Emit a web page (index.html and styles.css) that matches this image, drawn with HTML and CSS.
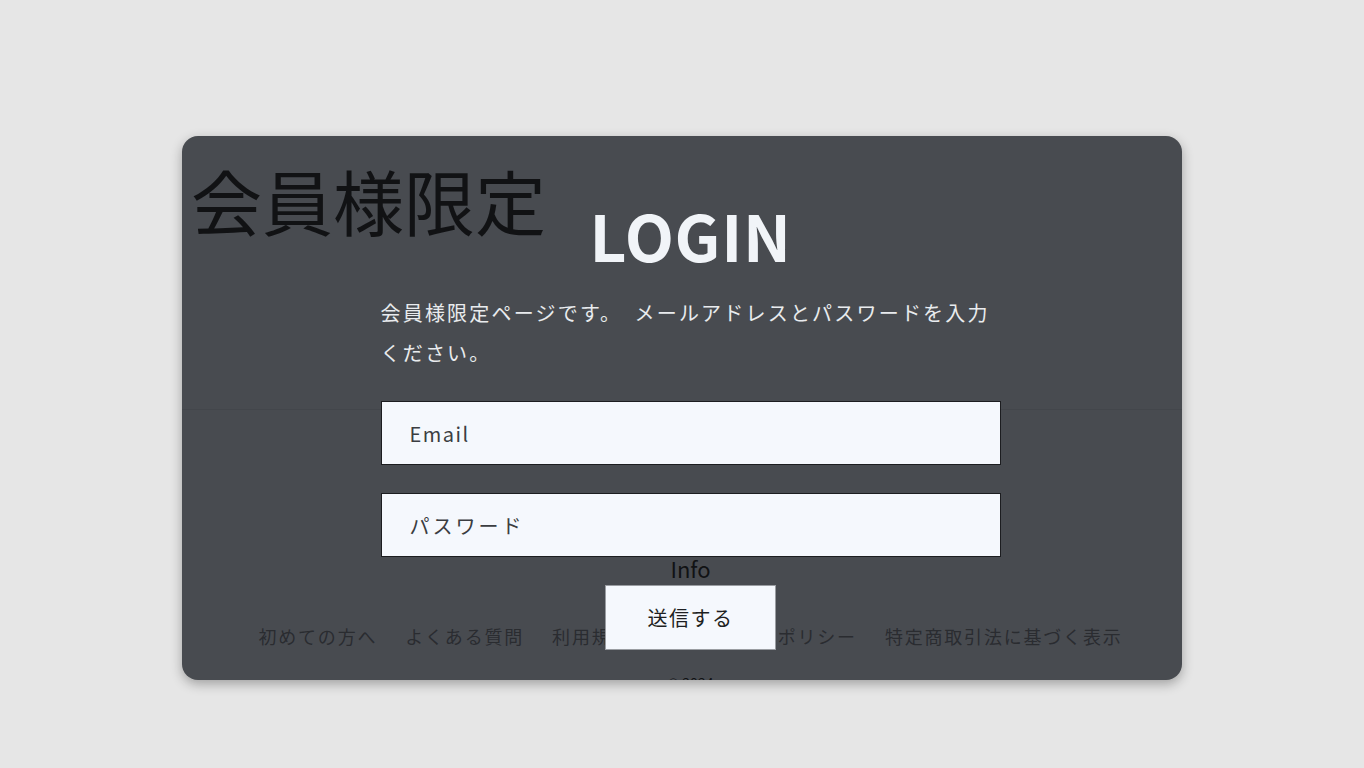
FILE: index.html
```html
<!DOCTYPE html>
<html lang="ja">
  <head>
    <meta charset="utf-8">
    <title>会員様限定 | LOGIN</title>
    <link rel="stylesheet" href="styles.css">
  </head>
  <body>
    <div class="modal">
      <!-- page behind the login form -->
      <div class="page">
        <header class="site-header">
          <h1 class="site-title">会員様限定</h1>
        </header>
        <footer class="site-footer">
          <h2 class="footer-title">Info</h2>
          <ul class="footer-links">
            <li><a href="#">初めての方へ</a></li>
            <li><a href="#">よくある質問</a></li>
            <li><a href="#">利用規約</a></li>
            <li><a href="#">プライバシーポリシー</a></li>
            <li><a href="#">特定商取引法に基づく表示</a></li>
          </ul>
          <p class="copyright">&copy; 2024</p>
        </footer>
      </div>

      <form class="login" action="#">
        <h2 class="login-title">LOGIN</h2>
        <p class="login-text">会員様限定ページです。&ensp;メールアドレスとパスワードを入力ください。</p>
        <input class="field" type="text" placeholder="Email" id="email">
        <input class="field" type="password" placeholder="パスワード" id="pasw">
        <button class="submit" type="button">送信する</button>
      </form>
    </div>
  </body>
</html>
```

FILE: styles.css
```css
html, body {
  margin: 0;
  background: #e6e6e6;
  font-family: "Noto Sans CJK JP", "Noto Sans", sans-serif;
}
body {
  display: flex;
  justify-content: center;
  padding-top: 136px;
  height: 632px;
  box-sizing: content-box;
}
.modal {
  position: relative;
  width: 1000px;
  height: 544px;
  background: #484b50;
  border-radius: 16px;
  overflow: hidden;
  box-shadow: 0 4px 12px rgba(0, 0, 0, 0.3);
}

/* page behind */
.page {
  display: flex;
  flex-direction: column;
}
.site-header {
  height: 273px;
  border-bottom: 1px solid rgba(0, 0, 0, 0.06);
}
.site-title {
  margin: 0;
  padding: 28px 0 0 9px;
  font-size: 71px;
  line-height: 1;
  font-weight: 400;
  color: #111214;
}
.site-footer {
  padding: 143px 0 0 17px;
  text-align: center;
}
.footer-title {
  margin: 0;
  font-size: 22px;
  line-height: 30px;
  font-weight: 400;
  color: #111214;
}
.footer-links {
  display: flex;
  justify-content: center;
  gap: 28px;
  list-style: none;
  margin: 38px 0 0;
  padding: 0;
}
.footer-links a {
  color: #2a2c30;
  text-decoration: none;
  font-size: 18px;
  line-height: 30px;
  letter-spacing: 0.1em;
}
.copyright {
  margin: 22px 0 0;
  font-size: 14px;
  line-height: 20px;
  color: #111214;
}

/* login form on top */
.login {
  position: absolute;
  top: 0;
  left: 0;
  right: 0;
  bottom: 0;
  display: flex;
  flex-direction: column;
  align-items: center;
  padding: 58px 0 0 17px;
}
.login-title {
  margin: 0;
  font-size: 64px;
  line-height: 80px;
  font-weight: 700;
  letter-spacing: 0.01em;
  color: #f1f4f8;
}
.login-text {
  width: 620px;
  margin: 19px 0 0;
  font-size: 20px;
  line-height: 40px;
  letter-spacing: 0.11em;
  color: #e9ebee;
}
.field {
  width: 620px;
  height: 64px;
  margin-top: 28px;
  padding: 0 28px;
  box-sizing: border-box;
  border: 1px solid #1c1d20;
  background: #f5f8fd;
  font-family: inherit;
  font-size: 20px;
  letter-spacing: 0.075em;
  color: #333;
}
.field::placeholder {
  color: #3b3d41;
}
#pasw::placeholder {
  letter-spacing: 0.15em;
}
.submit {
  width: 171px;
  height: 65px;
  margin-top: 28px;
  border: 1px solid #9a9da2;
  background: #f5f8fd;
  font-family: inherit;
  font-size: 20px;
  letter-spacing: 0.075em;
  color: #1e1f22;
  cursor: pointer;
}
```
